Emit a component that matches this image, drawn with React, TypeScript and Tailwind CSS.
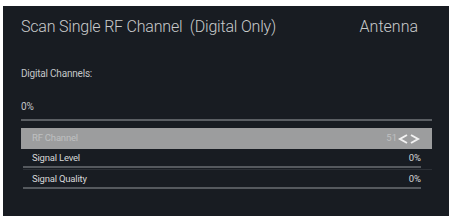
export default function App() {
  return (
    <div className="w-[455px] h-[221px] bg-white pt-[6px] pl-[3px] font-['Roboto',sans-serif]">
      <div className="w-[446px] h-[210px] bg-[#181c22] pl-[18px] pr-[17px] pt-[10px]">
        <div className="flex items-center justify-between h-[22px] pr-[14px]">
          <span className="text-[16px] font-light text-[#c9cbcc] tracking-[-0.2px]">
            Scan Single RF Channel&nbsp; (Digital Only)
          </span>
          <span className="text-[16px] font-light text-[#c9cbcc]">Antenna</span>
        </div>
        <div className="mt-[30px] text-[10px] text-[#c4c6c8] tracking-[-0.2px] leading-[12px]">
          Digital Channels:
        </div>
        <div className="mt-[21px] text-[10px] text-[#c4c6c8] leading-[12px]">0%</div>
        <div className="mt-[6px] h-[2px] bg-[#5a5e63]" />
        <div className="mt-[7px] h-[21px] bg-[#9c9d9e] flex items-center justify-between pl-[11px] pr-[12px]">
          <span className="text-[9.5px] text-[#bfc0c1] tracking-[-0.2px]">RF Channel</span>
          <span className="flex items-center gap-[1px] text-[9.5px] text-[#bfc0c1]">
            51
            <svg width="22" height="10" viewBox="0 0 22 10" fill="none" stroke="#f2f2f2" strokeWidth="2">
              <path d="M9 1 L2 5 L9 9" />
              <path d="M13 1 L20 5 L13 9" />
            </svg>
          </span>
        </div>
        <div className="pl-[2px]">
          <div className="flex items-center justify-between h-[19px] pt-[2px] pl-[9px] pr-[12px] border-b-2 border-[#55595e] mr-[11px]">
            <span className="text-[9.5px] text-[#d6d7d8] tracking-[-0.2px]">Signal Level</span>
            <span className="text-[9.5px] text-[#d6d7d8] -mr-[12px]">0%</span>
          </div>
          <div className="h-px bg-[#2c3036] mt-[1px]" />
          <div className="flex items-center justify-between h-[19px] pt-[2px] pl-[9px] pr-[12px] border-b-2 border-[#55595e] mr-[11px]">
            <span className="text-[9.5px] text-[#d6d7d8] tracking-[-0.2px]">Signal Quality</span>
            <span className="text-[9.5px] text-[#d6d7d8] -mr-[12px]">0%</span>
          </div>
        </div>
      </div>
    </div>
  );
}
